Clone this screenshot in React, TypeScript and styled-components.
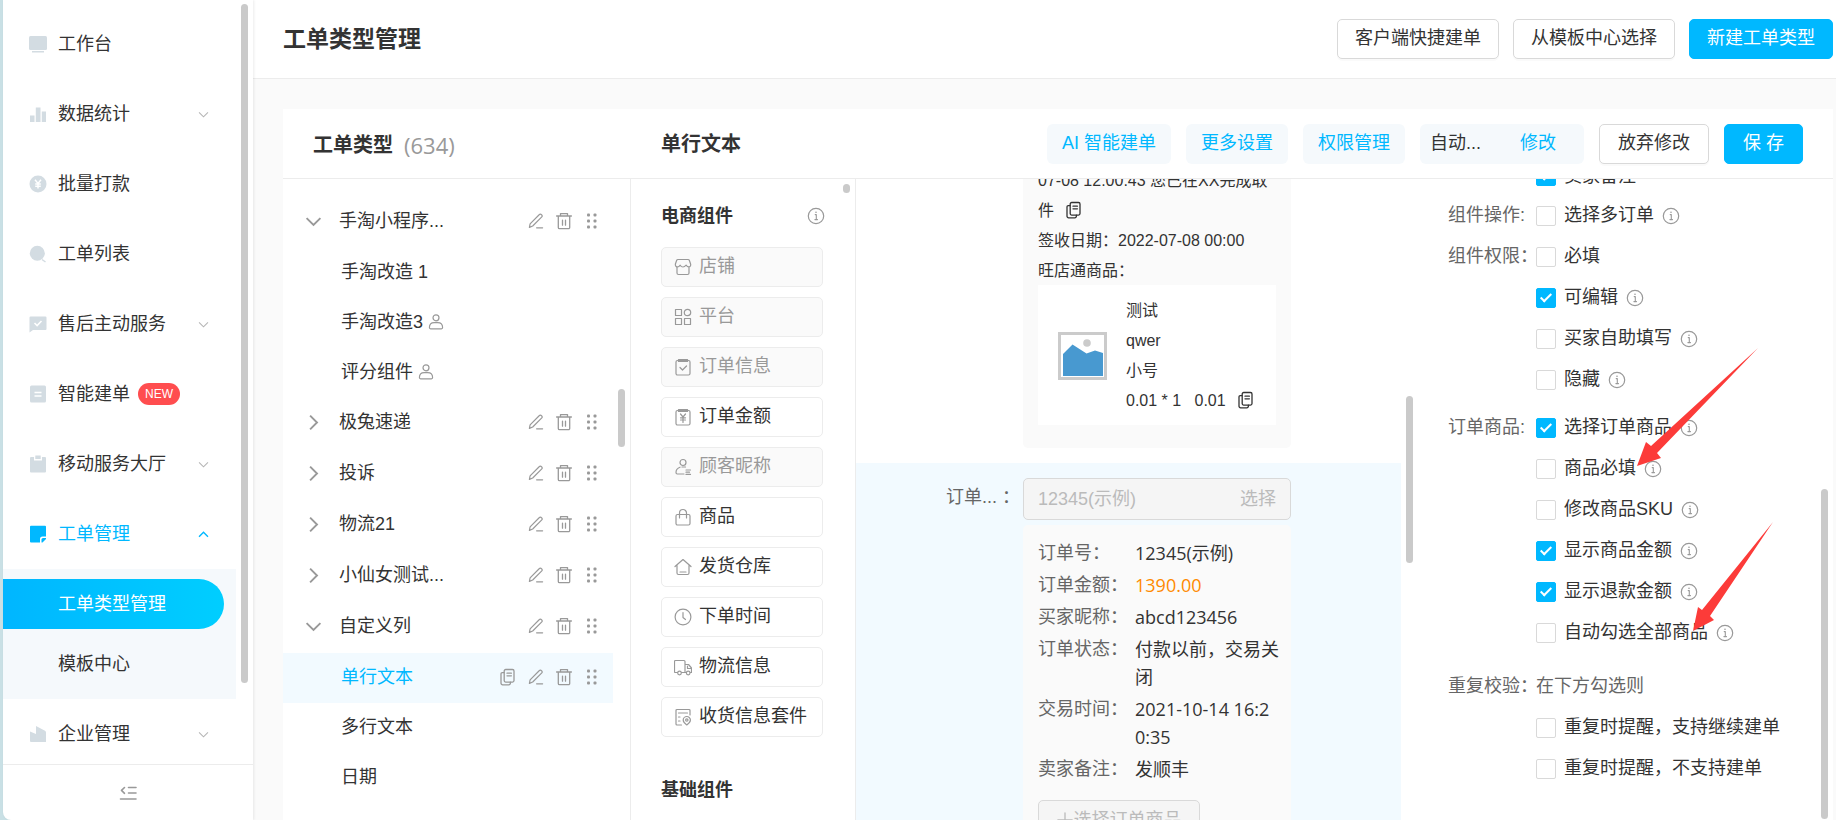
import React from "react";
import styled, { createGlobalStyle, css } from "styled-components";

const LATIN = `"Liberation Sans", "Noto Sans CJK SC", sans-serif`;
const HUMANIST = `"Open Sans", "Noto Sans CJK SC", sans-serif`;

const c = {
  brand: "#00b8ff",
  text: "#333",
  label: "#666",
  muted: "#999",
  line: "#ececec",
  page: "#fafafa",
  tint: "#f5f9fc",
  active: "#f2faff",
  thumb: "#cacaca",
  navIcon: "#d3dce2",
};

const GlobalStyle = createGlobalStyle`
  *, *::before, *::after { box-sizing: border-box; }
  body { margin: 0; background: ${c.page}; color: ${c.text}; font: 18px/28px ${LATIN}; }
  button, input { font: inherit; color: inherit; }
  button { margin: 0; padding: 0; border: 0; background: none; cursor: pointer; white-space: nowrap; }
  a { color: inherit; text-decoration: none; }
  ul { margin: 0; padding: 0; list-style: none; }
  h1, h2, h3, p, dl, dd, dt { margin: 0; }
  svg { display: block; flex: none; }
`;

/* ---------- frame ---------- */

const Shell = styled.div`
  position: relative;
  display: flex;
  height: 100vh;
  overflow: hidden;
  background: #c9e0e5;
  padding-left: 3px;
`;

const Thumb = styled.span<{ $top: number; $height: number; $right: number }>`
  position: absolute;
  top: ${(p) => p.$top}px;
  right: ${(p) => p.$right}px;
  width: 7px;
  height: ${(p) => p.$height}px;
  border-radius: 4px;
  background: ${c.thumb};
`;

/* ---------- sidebar ---------- */

const Sidebar = styled.aside`
  position: relative;
  z-index: 1;
  flex: 0 0 250px;
  display: flex;
  flex-direction: column;
  background: #fff;
  border-bottom-left-radius: 8px;
  box-shadow: 1px 0 3px rgba(0, 0, 0, 0.08);
`;

const NavScroll = styled.nav`
  flex: 1;
  min-height: 0;
  overflow: hidden;
  padding-top: 9px;
`;

const NavItem = styled.a<{ $active?: boolean }>`
  display: flex;
  align-items: center;
  height: 70px;
  padding: 0 44px 0 26px;
  color: ${(p) => (p.$active ? c.brand : c.text)};
  > svg:first-child {
    margin-right: 11px;
    color: ${(p) => (p.$active ? c.brand : c.navIcon)};
  }
  > svg:last-child:not(:first-child) {
    margin-left: auto;
    color: ${(p) => (p.$active ? c.brand : "#b5b5b5")};
  }
`;

const NewBadge = styled.span`
  margin-left: 8px;
  padding: 0 7px;
  border-radius: 11px;
  background: #ff4d4f;
  color: #fff;
  font-size: 12px;
  line-height: 22px;
`;

const SubMenu = styled.ul`
  width: 233px;
  padding: 10px 0;
  background: ${c.tint};
`;

const SubItem = styled.a<{ $active?: boolean }>`
  display: flex;
  align-items: center;
  height: 50px;
  margin-right: 12px;
  padding-left: 55px;
  border-radius: 0 25px 25px 0;
  ${(p) =>
    p.$active &&
    css`
      margin-bottom: 10px;
      color: #fff;
      background: linear-gradient(90deg, #00b6ff, #00ceff);
    `}
`;

const SidebarFooter = styled.div`
  flex: 0 0 56px;
  display: flex;
  align-items: center;
  justify-content: center;
  border-top: 1px solid ${c.line};
  color: ${c.muted};
`;

/* ---------- page header ---------- */

const Main = styled.main`
  flex: 1;
  min-width: 0;
  display: flex;
  flex-direction: column;
  background: ${c.page};
`;

const PageHeader = styled.header`
  flex: 0 0 79px;
  display: flex;
  align-items: center;
  gap: 14px;
  padding: 0 3px 0 30px;
  background: #fff;
  border-bottom: 1px solid ${c.line};
`;

const PageTitle = styled.h1`
  flex: 1;
  font-size: 23px;
  line-height: 32px;
  font-weight: 700;
`;

const Button = styled.button<{ $primary?: boolean }>`
  height: 40px;
  padding: 0 17px 2px;
  border: 1px solid ${(p) => (p.$primary ? c.brand : "#d9d9d9")};
  border-radius: 5px;
  background: ${(p) => (p.$primary ? c.brand : "#fff")};
  color: ${(p) => (p.$primary ? "#fff" : c.text)};
  box-shadow: ${(p) => (p.$primary ? "none" : "0 2px 0 rgba(0, 0, 0, 0.02)")};
`;

/* ---------- work card ---------- */

const Card = styled.section`
  flex: 1;
  min-height: 0;
  display: flex;
  flex-direction: column;
  margin: 30px 3px 0 30px;
  background: #fff;
`;

const CardHeader = styled.header`
  flex: 0 0 70px;
  display: flex;
  align-items: center;
  border-bottom: 1px solid ${c.line};
  padding: 0 30px;
`;

const CardTitle = styled.h2`
  flex: 0 0 348px;
  display: flex;
  align-items: center;
  padding-top: 3px;
  font-size: 20px;
  font-weight: 700;
`;

const Count = styled.span`
  margin-left: 11px;
  color: ${c.muted};
  font-family: ${HUMANIST};
  font-size: 22px;
  font-weight: 400;
`;

const FormTitle = styled(CardTitle)`
  flex: 1;
  padding-top: 0;
`;

const Toolbar = styled.div`
  display: flex;
  align-items: center;
  gap: 15px;
  ${Button} {
    padding: 0 18px 2px;
  }
`;

const SoftButton = styled.button`
  height: 40px;
  padding: 0 15px 2px;
  border-radius: 6px;
  background: ${c.tint};
  color: ${c.brand};
`;

const AutoName = styled.div`
  display: flex;
  align-items: center;
  justify-content: space-between;
  width: 164px;
  height: 40px;
  padding: 0 28px 2px 10px;
  border-radius: 6px;
  background: ${c.tint};
  button {
    color: ${c.brand};
  }
`;

const Columns = styled.div`
  flex: 1;
  min-height: 0;
  display: flex;
`;

const Column = styled.div<{ $width?: number; $rule?: boolean }>`
  position: relative;
  overflow: hidden;
  flex: ${(p) => (p.$width ? `0 0 ${p.$width}px` : "1 1 0")};
  border-right: ${(p) => (p.$rule ? `1px solid ${c.line}` : "0")};
`;

/* ---------- type tree ---------- */

const Tree = styled.ul`
  padding: 18px 17px 0 0;
`;

const TreeRow = styled.li<{ $group?: boolean; $selected?: boolean }>`
  display: flex;
  align-items: center;
  height: ${(p) => (p.$group ? 51 : 50)}px;
  padding: 0 12px 3px ${(p) => (p.$group ? 22 : 58)}px;
  background: ${(p) => (p.$selected ? c.active : "transparent")};
  color: ${(p) => (p.$selected ? c.brand : c.text)};
  > svg {
    color: ${c.muted};
  }
`;

const TreeName = styled.span<{ $group?: boolean }>`
  margin-left: ${(p) => (p.$group ? 17 : 0)}px;
  margin-right: 4px;
`;

const RowActions = styled.span`
  display: flex;
  gap: 10px;
  margin-left: auto;
  color: ${c.muted};
`;

const IconButton = styled.button`
  width: 18px;
  height: 18px;
  display: grid;
  place-items: center;
`;

/* ---------- component palette ---------- */

const Palette = styled.div`
  padding: 23px 32px 0 30px;
`;

const PaletteTitle = styled.h3`
  display: flex;
  align-items: center;
  justify-content: space-between;
  font-size: 18px;
  font-weight: 700;
  > svg {
    color: ${c.muted};
    margin-right: -2px;
  }
`;

const PaletteList = styled.div`
  display: flex;
  flex-direction: column;
  gap: 10px;
  padding: 17px 0 39px;
`;

const PaletteItem = styled.button`
  display: flex;
  align-items: center;
  gap: 7px;
  height: 40px;
  padding: 0 0 0 12px;
  border: 1px solid ${c.line};
  border-radius: 5px;
  background: #fff;
  span {
    padding-bottom: 3px;
  }
  &:disabled {
    background: ${c.page};
    color: ${c.muted};
  }
  > svg {
    color: ${c.muted};
  }
`;

/* ---------- preview ---------- */

const PreviewScroll = styled.div`
  margin-top: -28px;
`;

const PreviewRow = styled.div<{ $selected?: boolean }>`
  display: flex;
  width: calc(100% - 1px);
  padding: ${(p) => (p.$selected ? "15px 0 60px" : "0 0 15px")};
  background: ${(p) => (p.$selected ? c.active : "transparent")};
`;

const PreviewLabel = styled.span`
  flex: 0 0 167px;
  padding: 5px 3px 0 0;
  text-align: right;
  color: ${c.label};
`;

const PreviewBody = styled.div`
  flex: 0 0 268px;
  min-width: 0;
`;

const LogisticsBox = styled.div`
  padding: 15px 15px 23px;
  border-radius: 5px;
  background: ${c.page};
  font-size: 16px;
  line-height: 30px;
`;

const InlineIcon = styled.span`
  display: inline-block;
  margin-left: 11px;
  vertical-align: -3px;
`;

const Goods = styled.div`
  display: flex;
  align-items: center;
  gap: 19px;
  margin-top: -1px;
  padding: 11px 0 9px 20px;
  background: #fff;
  p {
    white-space: pre;
  }
`;

const OrderPicker = styled.div`
  display: flex;
  align-items: center;
  height: 42px;
  padding: 0 14px;
  border: 1px solid #d9d9d9;
  border-radius: 5px;
  background: #f5f5f5;
  color: #bbb;
  input {
    flex: 1;
    min-width: 0;
    padding: 0;
    border: 0;
    outline: 0;
    background: none;
    color: inherit;
  }
`;

const OrderDetail = styled.div`
  margin-top: 5px;
  padding: 14px 0 40px 15px;
  border-radius: 5px 5px 0 0;
  background: ${c.page};
`;

const Facts = styled.dl`
  display: grid;
  grid-template-columns: 97px 144px;
  row-gap: 4px;
  margin-bottom: 17px;
  dt {
    color: ${c.label};
  }
  dd {
    font-family: ${HUMANIST};
    word-break: break-all;
  }
`;

const Amount = styled.dd`
  color: #ff8a00;
`;

const AddGoods = styled.button`
  display: flex;
  align-items: center;
  justify-content: center;
  gap: 1px;
  width: 162px;
  height: 40px;
  border: 1px solid #d9d9d9;
  border-radius: 5px;
  background: #f5f5f5;
  color: #bbb;
`;

/* ---------- settings ---------- */

const Settings = styled.form`
  margin-top: -22px;
  padding-left: 46px;
`;

const SettingGroup = styled.div<{ $space?: number; $tight?: boolean }>`
  display: flex;
  margin-top: ${(p) => p.$space ?? 0}px;
  line-height: ${(p) => (p.$tight ? 38 : 41)}px;
`;

const SettingLabel = styled.span`
  flex: 0 0 88px;
  min-width: 0;
  white-space: nowrap;
  color: ${c.label};
`;

const SettingHint = styled.p`
  color: ${c.label};
`;

const CheckRow = styled.div`
  display: flex;
  align-items: center;
  svg {
    margin-left: 8px;
    color: ${c.muted};
  }
`;

const CheckLabel = styled.label`
  display: flex;
  align-items: center;
  gap: 8px;
`;

const Checkbox = styled.input`
  appearance: none;
  display: grid;
  place-items: center;
  width: 20px;
  height: 20px;
  margin: 0;
  border: 1px solid #d9d9d9;
  border-radius: 2px;
  background: #fff;
  &:checked {
    border-color: ${c.brand};
    background: ${c.brand};
  }
  &:checked::after {
    content: "";
    width: 6px;
    height: 11px;
    margin-top: -3px;
    border: solid #fff;
    border-width: 0 2px 2px 0;
    transform: rotate(45deg);
  }
`;

const Arrows = styled.svg`
  position: absolute;
  top: 0;
  right: 0;
  z-index: 2;
  pointer-events: none;
`;

/* ---------- icons ---------- */

const Line = ({ size = 18, w = 1.2, children }: { size?: number; w?: number; children: React.ReactNode }) => (
  <svg width={size} height={size} viewBox="0 0 18 18" fill="none" stroke="currentColor" strokeWidth={w} strokeLinejoin="round" strokeLinecap="round" aria-hidden="true">
    {children}
  </svg>
);

const Solid = ({ children }: { children: React.ReactNode }) => (
  <svg width="18" height="18" viewBox="0 0 18 18" fill="currentColor" aria-hidden="true">
    {children}
  </svg>
);

const Chevron = ({ dir = "down", size = 16, w = 1.5 }: { dir?: "down" | "up" | "right"; size?: number; w?: number }) => (
  <svg width={size} height={size} viewBox="0 0 16 16" fill="none" stroke="currentColor" strokeWidth={w} aria-hidden="true">
    <path d={dir === "down" ? "M1.5 4.8 8 11.3l6.5-6.5" : dir === "up" ? "M1.5 11.2 8 4.7l6.5 6.5" : "M4.8 1.5 11.3 8l-6.5 6.5"} />
  </svg>
);

const InfoIcon = () => (
  <Line w={1.2}>
    <circle cx="9" cy="9" r="7.7" />
    <path d="M8.2 7.6H9.300v5M7.900 12.6h2.600" strokeWidth="1.1" />
    <circle cx="9" cy="5.2" r=".8" fill="currentColor" stroke="none" />
  </Line>
);

const CopyIcon = () => (
  <Line w={1.3}>
    <rect x="5.2" y="1.5" width="9.8" height="12.6" rx="1.5" />
    <path d="M5 4.6H3.2a1.2 1.2 0 0 0-1.2 1.2v9.4a1.6 1.6 0 0 0 1.6 1.6h6.2a1.6 1.6 0 0 0 1.6-1.6v-1M8 5.2h4.4M8 7.8h4.4" />
  </Line>
);

const PenIcon = () => (
  <Line w={1.2}>
    <path d="M2.4 15.4l.7-3.6 9.3-9.3a1.3 1.3 0 0 1 1.9 0l.5.5a1.3 1.3 0 0 1 0 1.9L5.7 14zM9.6 15.8h6" />
  </Line>
);

const TrashIcon = () => (
  <Line w={1.3}>
    <path d="M1.6 4h14.8M5.5 3.8V1.6h7v2.2M3.3 4.2v11.3a1.2 1.2 0 0 0 1.2 1.2h9a1.2 1.2 0 0 0 1.2-1.2V4.2M7.5 8.2v5M10.500 8.2v5" />
  </Line>
);

const DotsIcon = () => (
  <Solid>
    {[3, 9, 15].map((y) => (
      <React.Fragment key={y}>
        <rect x="4" y={y - 1.5} width="3" height="3" rx="1" />
        <rect x="10.5" y={y - 1.5} width="3" height="3" rx="1" />
      </React.Fragment>
    ))}
  </Solid>
);

const PersonIcon = () => (
  <Line w={1.2}>
    <circle cx="9" cy="4.8" r="3" />
    <path d="M2.400 14.600c0-3 2-5 4.800-5h3.600c2.800 0 4.800 2 4.800 5 0 .8-.5 1.200-1.200 1.200H3.600c-.7 0-1.200-.4-1.200-1.200z" />
  </Line>
);

const CollapseIcon = () => (
  <Line w={1.6}>
    <path d="M5.5 3.5 2.5 6.4l3 2.900M9.5 3.5H17M9.5 9H17M1.5 15H17" />
  </Line>
);

const navIcons = {
  desk: (
    <Solid>
      <rect x="0" y="1" width="18" height="14" rx="1.5" />
      <rect x="3" y="16" width="12" height="1.5" />
    </Solid>
  ),
  bars: (
    <Solid>
      <path d="M1 10.500h4.500V17H1zM6.800 2.500h4.700V17H6.800zM12.800 6.500H17V17h-4.200z" />
    </Solid>
  ),
  coin: (
    <Solid>
      <circle cx="9" cy="9" r="8.500" />
      <path d="M6 4.800 9 8.400l3-3.600M9 8.400v5M6.200 9h5.600M6.200 11.300h5.600" stroke="#fff" strokeWidth="1.500" fill="none" />
    </Solid>
  ),
  search: (
    <Solid>
      <circle cx="8.300" cy="8.300" r="7.500" />
      <path d="M13 14.500 16.500 17" stroke="currentColor" strokeWidth="1.500" />
    </Solid>
  ),
  chat: (
    <Solid>
      <path d="M1.500 1.500h15a1 1 0 0 1 1 1V14a1 1 0 0 1-1 1H4l-3.500 2.500v-15a1 1 0 0 1 1-1z" />
      <path d="M5.500 8l2.600 2.500L12.500 6" stroke="#fff" strokeWidth="1.600" fill="none" />
    </Solid>
  ),
  doc: (
    <Solid>
      <rect x="1" y=".5" width="16" height="17" rx="1.500" />
      <path d="M5.500 7.500h7M5.500 11h7" stroke="#fff" strokeWidth="1.400" />
    </Solid>
  ),
  clip: (
    <Solid>
      <path d="M2 2h3v3.500h8V2h3a1 1 0 0 1 1 1v13.500a1 1 0 0 1-1 1H2a1 1 0 0 1-1-1V3a1 1 0 0 1 1-1z" />
      <rect x="6.300" y=".5" width="5.400" height="3.500" />
    </Solid>
  ),
  note: (
    <Solid>
      <path d="M2 .8h14a1 1 0 0 1 1 1v9.700h-3.500a2.500 2.500 0 0 0-2.500 2.500v3.500H2a1 1 0 0 1-1-1V1.800a1 1 0 0 1 1-1z" />
      <path d="M17 13v1l-3.500 3.500h-1v-3a1.500 1.500 0 0 1 1.500-1.500z" />
    </Solid>
  ),
  factory: (
    <Solid>
      <path d="M1 6.500 7 9V1l9 4.800a2 2 0 0 1 1 1.700v9.500H2a1 1 0 0 1-1-1z" />
    </Solid>
  ),
};

const ClipFrame = () => (
  <>
    <rect x="2" y="2.500" width="14" height="14.500" rx="1.500" />
    <path d="M4.500 1.500h9v2h-9z" />
  </>
);

const paletteIcons = {
  shop: (
    <Line>
      <path d="M3 8.500V15a1.500 1.500 0 0 0 1.500 1.500h9A1.500 1.500 0 0 0 15 15V8.500M4 1.500h10a1.500 1.500 0 0 1 1.400 1l1.200 3.500c.5 1.500-.4 3-1.800 3-1.200 0-2-.8-2.700-1.800C11.200 8.200 10.400 9 9 9s-2.200-.8-2.800-1.800C5.500 8.200 4.700 9 3.500 9 2.100 9 1 7.500 1.400 6l1.200-3.500a1.500 1.500 0 0 1 1.400-1z" />
    </Line>
  ),
  grid: (
    <Line>
      <rect x="1.500" y="1.500" width="6" height="6" />
      <circle cx="13.500" cy="4.500" r="3.200" />
      <rect x="1.500" y="10.500" width="6" height="6" />
      <rect x="10.500" y="10.500" width="6" height="6" />
    </Line>
  ),
  order: (
    <Line>
      <ClipFrame />
      <path d="M6 9.500l2.500 2.500L12.500 8" />
    </Line>
  ),
  money: (
    <Line>
      <ClipFrame />
      <path d="M6.500 6 9 9l2.500-3M9 9v5.500M6.500 9.800h5M6.500 12h5" />
    </Line>
  ),
  buyer: (
    <Line>
      <circle cx="9" cy="4.500" r="3" />
      <path d="M6 9.200c-2.500.8-4 3-4 5.300 0 .9.500 1.500 1.300 1.500H10M8 9h3.500M12 12h4.500M12 14.200h3.500M12 16.400h4.500" />
    </Line>
  ),
  bag: (
    <Line>
      <rect x="2" y="6.500" width="14" height="10.500" rx="1.500" />
      <path d="M5.500 10V5A3.500 3.500 0 0 1 9 1.500 3.500 3.500 0 0 1 12.500 5v5" />
    </Line>
  ),
  house: (
    <Line>
      <path d="M1 8.500 9 1.500l8 7M3 7.500V15a1.500 1.500 0 0 0 1.500 1.500h9A1.500 1.500 0 0 0 15 15V7.500M6 14h6" />
    </Line>
  ),
  clock: (
    <Line>
      <circle cx="9" cy="9" r="7.900" />
      <path d="M9 4.500V9.500l2.500 2" />
    </Line>
  ),
  truck: (
    <Line>
      <path d="M3.500 14.500H1.200a.7.700 0 0 1-.7-.7V3.500a1 1 0 0 1 1-1H10a1 1 0 0 1 1 1v11H7.500M11 6.500h3.500l3 3.500v4.500h-1M11 14.500h1M13.500 8v2.500H17" />
      <circle cx="5.500" cy="15" r="1.800" />
      <circle cx="14.200" cy="15" r="1.800" />
    </Line>
  ),
  address: (
    <Line>
      <path d="M16 7V2.500A1 1 0 0 0 15 1.500H3a1 1 0 0 0-1 1v13.500a1 1 0 0 0 1 1h4.500M4.500 5h9M4.500 9H6M4.500 13H6M12.800 17c-2.300-1.500-3.600-3-3.600-4.900a3.600 3.600 0 0 1 7.200 0c0 1.900-1.300 3.400-3.600 4.900z" />
      <circle cx="12.800" cy="12" r="1.200" />
    </Line>
  ),
};

/* ---------- data ---------- */

type NavKey = keyof typeof navIcons;
type PaletteKey = keyof typeof paletteIcons;

const navTop: { icon: NavKey; name: string; more?: boolean; isNew?: boolean }[] = [
  { icon: "desk", name: "工作台" },
  { icon: "bars", name: "数据统计", more: true },
  { icon: "coin", name: "批量打款" },
  { icon: "search", name: "工单列表" },
  { icon: "chat", name: "售后主动服务", more: true },
  { icon: "doc", name: "智能建单", isNew: true },
  { icon: "clip", name: "移动服务大厅", more: true },
];

const tree: { name: string; group?: "open" | "closed"; person?: boolean; selected?: boolean }[] = [
  { name: "手淘小程序...", group: "open" },
  { name: "手淘改造 1" },
  { name: "手淘改造3", person: true },
  { name: "评分组件", person: true },
  { name: "极兔速递", group: "closed" },
  { name: "投诉", group: "closed" },
  { name: "物流21", group: "closed" },
  { name: "小仙女测试...", group: "closed" },
  { name: "自定义列", group: "open" },
  { name: "单行文本", selected: true },
  { name: "多行文本" },
  { name: "日期" },
];

const palette: { icon: PaletteKey; name: string; off?: boolean }[] = [
  { icon: "shop", name: "店铺", off: true },
  { icon: "grid", name: "平台", off: true },
  { icon: "order", name: "订单信息", off: true },
  { icon: "money", name: "订单金额" },
  { icon: "buyer", name: "顾客昵称", off: true },
  { icon: "bag", name: "商品" },
  { icon: "house", name: "发货仓库" },
  { icon: "clock", name: "下单时间" },
  { icon: "truck", name: "物流信息" },
  { icon: "address", name: "收货信息套件" },
];

type Option = { name: string; on?: boolean; info?: boolean };

const settings: { label: string; hint?: string; space?: number; tight?: boolean; options: Option[] }[] = [
  { label: "", tight: true, options: [{ name: "卖家备注", on: true }] },
  { label: "组件操作:", options: [{ name: "选择多订单", info: true }] },
  {
    label: "组件权限：",
    options: [
      { name: "必填" },
      { name: "可编辑", on: true, info: true },
      { name: "买家自助填写", info: true },
      { name: "隐藏", info: true },
    ],
  },
  {
    label: "订单商品:",
    space: 7,
    options: [
      { name: "选择订单商品", on: true, info: true },
      { name: "商品必填", info: true },
      { name: "修改商品SKU", info: true },
      { name: "显示商品金额", on: true, info: true },
      { name: "显示退款金额", on: true, info: true },
      { name: "自动勾选全部商品", info: true },
    ],
  },
  {
    label: "重复校验：",
    hint: "在下方勾选则",
    space: 13,
    options: [{ name: "重复时提醒，支持继续建单" }, { name: "重复时提醒，不支持建单" }],
  },
];

/* ---------- parts ---------- */

const Nav = () => (
  <Sidebar>
    <NavScroll>
      {navTop.map((n) => (
        <NavItem href="#" key={n.name}>
          {navIcons[n.icon]}
          {n.name}
          {n.isNew && <NewBadge>NEW</NewBadge>}
          {n.more && <Chevron size={11} />}
        </NavItem>
      ))}
      <NavItem href="#" $active>
        {navIcons.note}
        工单管理
        <Chevron dir="up" size={11} w={2} />
      </NavItem>
      <SubMenu>
        <li>
          <SubItem href="#" $active>
            工单类型管理
          </SubItem>
        </li>
        <li>
          <SubItem href="#">模板中心</SubItem>
        </li>
      </SubMenu>
      <NavItem href="#">
        {navIcons.factory}
        企业管理
        <Chevron size={11} />
      </NavItem>
    </NavScroll>
    <SidebarFooter>
      <IconButton aria-label="收起菜单">
        <CollapseIcon />
      </IconButton>
    </SidebarFooter>
    <Thumb $top={4} $height={679} $right={5} />
  </Sidebar>
);

const TypeTree = () => (
  <Column $width={348} $rule>
    <Tree>
      {tree.map((t) => (
        <TreeRow key={t.name} $group={!!t.group} $selected={t.selected}>
          {t.group && <Chevron dir={t.group === "open" ? "down" : "right"} size={17} w={1.8} />}
          <TreeName $group={!!t.group}>{t.name}</TreeName>
          {t.person && <PersonIcon />}
          {(t.group || t.selected) && (
            <RowActions>
              {t.selected && (
                <IconButton aria-label="复制">
                  <CopyIcon />
                </IconButton>
              )}
              <IconButton aria-label="编辑">
                <PenIcon />
              </IconButton>
              <IconButton aria-label="删除">
                <TrashIcon />
              </IconButton>
              <IconButton aria-label="拖动">
                <DotsIcon />
              </IconButton>
            </RowActions>
          )}
        </TreeRow>
      ))}
    </Tree>
    <Thumb $top={210} $height={58} $right={5} />
  </Column>
);

const ComponentPalette = () => (
  <Column $width={225} $rule>
    <Palette>
      <PaletteTitle>
        电商组件
        <InfoIcon />
      </PaletteTitle>
      <PaletteList>
        {palette.map((p) => (
          <PaletteItem key={p.name} disabled={p.off}>
            {paletteIcons[p.icon]}
            <span>{p.name}</span>
          </PaletteItem>
        ))}
      </PaletteList>
      <PaletteTitle>基础组件</PaletteTitle>
    </Palette>
    <Thumb $top={5} $height={9} $right={5} />
  </Column>
);

const Preview = () => (
  <Column>
    <PreviewScroll>
      <PreviewRow>
        <PreviewLabel />
        <PreviewBody>
          <LogisticsBox>
            <p>
              07-08 12:00:43 您已在XX完成取件
              <InlineIcon>
                <CopyIcon />
              </InlineIcon>
            </p>
            <p>签收日期：2022-07-08 00:00</p>
            <p>旺店通商品：</p>
            <Goods>
              <svg width="49" height="48" viewBox="0 0 49 48" role="img" aria-label="商品图片">
                <rect x="1.5" y="1.5" width="46" height="45" fill="#fff" stroke="#cbcbcb" strokeWidth="3" />
                <path d="M5 22 14.500 12.500 28.500 21.500l8.500-3 8 2.500V44H5z" fill="#4899d0" />
                <circle cx="29" cy="11" r="3.800" fill="#cbcbcb" />
              </svg>
              <div>
                <p>测试</p>
                <p>qwer</p>
                <p>小号</p>
                <p>
                  {"0.01 * 1   0.01"}
                  <InlineIcon>
                    <CopyIcon />
                  </InlineIcon>
                </p>
              </div>
            </Goods>
          </LogisticsBox>
        </PreviewBody>
      </PreviewRow>
      <PreviewRow $selected>
        <PreviewLabel>订单... ：</PreviewLabel>
        <PreviewBody>
          <OrderPicker>
            <input readOnly value="12345(示例)" aria-label="订单号" />
            <button>选择</button>
          </OrderPicker>
          <OrderDetail>
            <Facts>
              <dt>订单号：</dt>
              <dd>12345(示例)</dd>
              <dt>订单金额：</dt>
              <Amount>1390.00</Amount>
              <dt>买家昵称：</dt>
              <dd>abcd123456</dd>
              <dt>订单状态：</dt>
              <dd>付款以前，交易关闭</dd>
              <dt>交易时间：</dt>
              <dd>2021-10-14 16:20:35</dd>
              <dt>卖家备注：</dt>
              <dd>发顺丰</dd>
            </Facts>
            <AddGoods>
              <Line size={16} w={1.5}>
                <path d="M9 1v16M1 9h16" />
              </Line>
              选择订单商品
            </AddGoods>
          </OrderDetail>
        </PreviewBody>
      </PreviewRow>
    </PreviewScroll>
  </Column>
);

const SettingsPanel = () => (
  <Column $width={431}>
    <Settings>
      {settings.map((g) => (
        <SettingGroup key={g.label} $space={g.space} $tight={g.tight}>
          <SettingLabel>{g.label}</SettingLabel>
          <div>
            {g.hint && <SettingHint>{g.hint}</SettingHint>}
            {g.options.map((o) => (
              <CheckRow key={o.name}>
                <CheckLabel>
                  <Checkbox type="checkbox" defaultChecked={o.on} />
                  {o.name}
                </CheckLabel>
                {o.info && <InfoIcon />}
              </CheckRow>
            ))}
          </div>
        </SettingGroup>
      ))}
    </Settings>
    <Thumb $top={217} $height={167} $right={420} />
    <Thumb $top={310} $height={330} $right={5} />
  </Column>
);

export default function App() {
  return (
    <>
      <GlobalStyle />
      <Shell>
        <Nav />
        <Main>
          <PageHeader>
            <PageTitle>工单类型管理</PageTitle>
            <Button>客户端快捷建单</Button>
            <Button>从模板中心选择</Button>
            <Button $primary>新建工单类型</Button>
          </PageHeader>
          <Card>
            <CardHeader>
              <CardTitle>
                工单类型<Count>(634)</Count>
              </CardTitle>
              <FormTitle>单行文本</FormTitle>
              <Toolbar>
                <SoftButton>AI 智能建单</SoftButton>
                <SoftButton>更多设置</SoftButton>
                <SoftButton>权限管理</SoftButton>
                <AutoName>
                  自动...<button>修改</button>
                </AutoName>
                <Button>放弃修改</Button>
                <Button $primary>保 存</Button>
              </Toolbar>
            </CardHeader>
            <Columns>
              <TypeTree />
              <ComponentPalette />
              <Preview />
              <SettingsPanel />
            </Columns>
          </Card>
        </Main>
        <Arrows width="200" height="660" viewBox="1636 0 200 660" aria-hidden="true">
          <g fill="#fc3b39">
            <path d="M1637 466 1646 442 1651 446 1758 348 1657 453 1661 458z" />
            <path d="M1693 631 1698 607 1702 610 1773 522 1710 616 1714 620z" />
          </g>
        </Arrows>
      </Shell>
    </>
  );
}
